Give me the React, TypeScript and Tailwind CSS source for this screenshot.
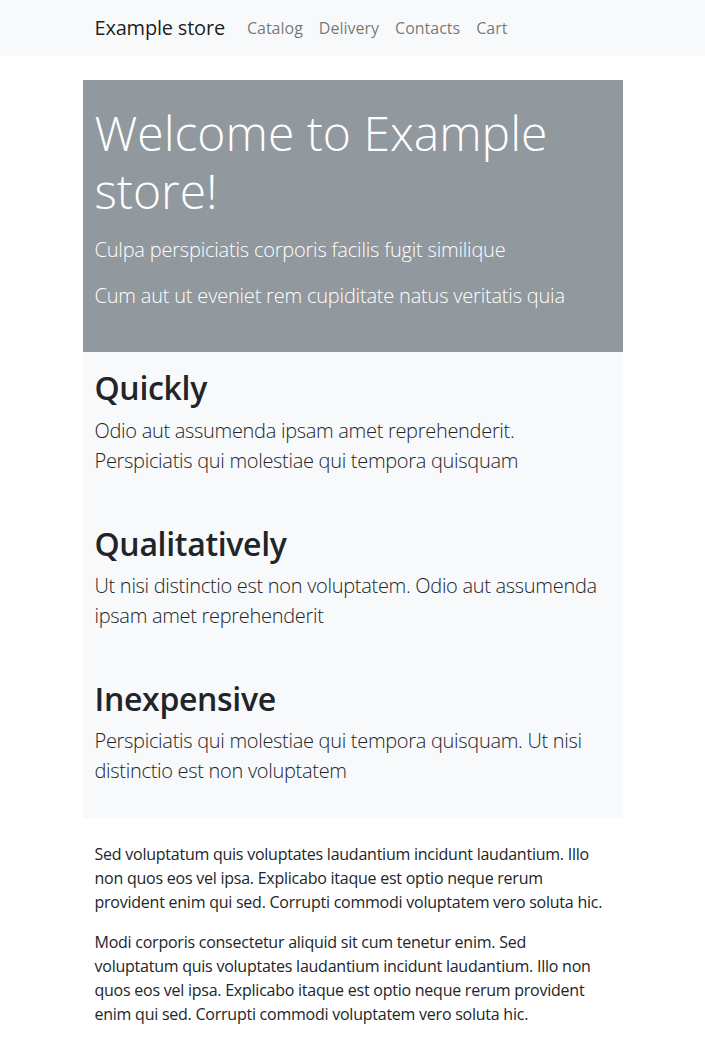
import React from 'react';

const navLinks = ['Catalog', 'Delivery', 'Contacts', 'Cart'];

const features = [
  {
    title: 'Quickly',
    text: 'Odio aut assumenda ipsam amet reprehenderit. Perspiciatis qui molestiae qui tempora quisquam',
  },
  {
    title: 'Qualitatively',
    text: 'Ut nisi distinctio est non voluptatem. Odio aut assumenda ipsam amet reprehenderit',
  },
  {
    title: 'Inexpensive',
    text: 'Perspiciatis qui molestiae qui tempora quisquam. Ut nisi distinctio est non voluptatem',
  },
];

const App = () => {
  return (
    <div className="min-h-screen bg-white text-[#212529] font-['Open_Sans',sans-serif]">
      {/* Navbar */}
      <nav className="h-14 bg-[#f8f9fa]">
        <div className="w-[540px] mx-auto px-3 h-full flex items-center">
          <a href="#" className="text-xl tracking-[-0.01em] text-black/90 mr-[14px]">Example store</a>
          <div className="flex">
            {navLinks.map((link) => (
              <a key={link} href="#" className="px-2 text-base text-black/55">
                {link}
              </a>
            ))}
          </div>
        </div>
      </nav>

      <main className="w-[540px] mx-auto mt-6">
        {/* Hero */}
        <section className="bg-[#91989e] text-white px-3 pt-6 pb-[25px]">
          <h1 className="text-5xl font-light leading-[1.2] mb-4">Welcome to Example store!</h1>
          <p className="text-xl font-light leading-normal tracking-[-0.01em] mb-4">Culpa perspiciatis corporis facilis fugit similique</p>
          <p className="text-xl font-light leading-normal tracking-[-0.01em] mb-4">Cum aut ut eveniet rem cupiditate natus veritatis quia</p>
        </section>

        {/* Features */}
        <section className="bg-[#f8f9fa] px-3 pt-[17px] pb-0">
          {features.map((f) => (
            <div key={f.title} className="pb-[49px] last:pb-[32px]">
              <h2 className="text-[32px] font-semibold leading-[1.2] tracking-[-0.01em] mb-2">{f.title}</h2>
              <p className="text-xl font-light leading-normal tracking-[-0.015em]">{f.text}</p>
            </div>
          ))}
        </section>

        {/* Text */}
        <section className="px-3 pt-6 text-base leading-6 tracking-[-0.015em]">
          <p className="mb-4">
            Sed voluptatum quis voluptates laudantium incidunt laudantium. Illo non quos eos vel ipsa. Explicabo itaque est optio neque rerum provident enim qui sed. Corrupti commodi voluptatem vero soluta hic.
          </p>
          <p className="mb-4">
            Modi corporis consectetur aliquid sit cum tenetur enim. Sed voluptatum quis voluptates laudantium incidunt laudantium. Illo non quos eos vel ipsa. Explicabo itaque est optio neque rerum provident enim qui sed. Corrupti commodi voluptatem vero soluta hic.
          </p>
        </section>
      </main>
    </div>
  );
};

export default App;
